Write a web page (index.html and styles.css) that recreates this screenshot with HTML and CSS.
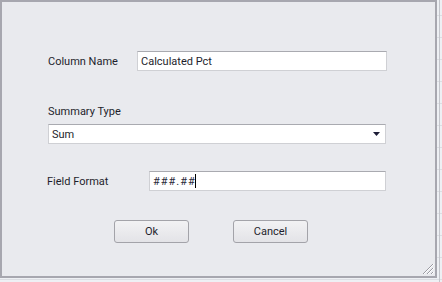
FILE: index.html
```html
<!DOCTYPE html>
<html>
<head>
<meta charset="utf-8">
<link rel="stylesheet" href="styles.css">
</head>
<body>
<div class="dialog">
  <div class="row row-name">
    <span class="label label-name">Column Name</span>
    <div class="field field-name">Calculated Pct</div>
  </div>
  <div class="label label-summary">Summary Type</div>
  <div class="field combo">
    <span>Sum</span>
    <svg class="arrow" width="7" height="4" viewBox="0 0 7 4"><path d="M0 0H7L3.5 4Z" fill="#1c1c36"/></svg>
  </div>
  <div class="row row-format">
    <span class="label label-format">Field Format</span>
    <div class="field field-format"><span class="mask">###.##</span><span class="caret"></span></div>
  </div>
  <div class="buttons">
    <button class="btn">Ok</button>
    <button class="btn">Cancel</button>
  </div>
  <svg class="grip" width="12" height="12" viewBox="0 0 12 12">
    <g fill="#9a9aa2">
      <rect x="10" y="1" width="1" height="1"/><rect x="9" y="2" width="1" height="1"/><rect x="8" y="3" width="1" height="1"/><rect x="7" y="4" width="1" height="1"/><rect x="6" y="5" width="1" height="1"/><rect x="5" y="6" width="1" height="1"/><rect x="4" y="7" width="1" height="1"/><rect x="3" y="8" width="1" height="1"/><rect x="2" y="9" width="1" height="1"/><rect x="1" y="10" width="1" height="1"/>
      <rect x="10" y="5" width="1" height="1"/><rect x="9" y="6" width="1" height="1"/><rect x="8" y="7" width="1" height="1"/><rect x="7" y="8" width="1" height="1"/><rect x="6" y="9" width="1" height="1"/><rect x="5" y="10" width="1" height="1"/>
      <rect x="10" y="9" width="1" height="1"/><rect x="9" y="10" width="1" height="1"/>
    </g>
    <g fill="#ffffff">
      <rect x="11" y="1" width="1" height="1"/><rect x="10" y="2" width="1" height="1"/><rect x="9" y="3" width="1" height="1"/><rect x="8" y="4" width="1" height="1"/><rect x="7" y="5" width="1" height="1"/><rect x="6" y="6" width="1" height="1"/><rect x="5" y="7" width="1" height="1"/><rect x="4" y="8" width="1" height="1"/><rect x="3" y="9" width="1" height="1"/><rect x="2" y="10" width="1" height="1"/>
      <rect x="11" y="5" width="1" height="1"/><rect x="10" y="6" width="1" height="1"/><rect x="9" y="7" width="1" height="1"/><rect x="8" y="8" width="1" height="1"/><rect x="7" y="9" width="1" height="1"/><rect x="6" y="10" width="1" height="1"/>
      <rect x="11" y="9" width="1" height="1"/><rect x="10" y="10" width="1" height="1"/>
    </g>
  </svg>
</div>
</body>
</html>
```

FILE: styles.css
```css
html, body {
  margin: 0;
  padding: 0;
}
body {
  width: 442px;
  height: 282px;
  overflow: hidden;
  background-color: #eef0f4;
  background-image:
    linear-gradient(to right, transparent 439px, #c4c6cc 439px, #c4c6cc 440px, transparent 440px),
    repeating-linear-gradient(to bottom, transparent 0, transparent 15px, #dcdee3 15px, #dcdee3 16px, transparent 16px, transparent 22px);
  font-family: Roboto, "Noto Sans", sans-serif;
  font-size: 11px;
  color: #1e1e2c;
}
.dialog {
  position: relative;
  box-sizing: border-box;
  width: 437px;
  height: 278px;
  border: 2px solid #a7a7af;
  background: #e9eaee;
  padding-left: 46px;
}
.row {
  display: flex;
  align-items: center;
}
.row-name {
  margin-top: 49px;
}
.label {
  line-height: 13px;
  white-space: nowrap;
}
.label-name {
  width: 89px;
}
.field {
  box-sizing: border-box;
  height: 20px;
  background: #ffffff;
  border: 1px solid #cfd0d4;
  border-top-color: #a9aab0;
  padding-left: 3px;
  display: flex;
  align-items: center;
  line-height: 13px;
}
.field-name {
  width: 250px;
}
.label-summary {
  margin-top: 34px;
  margin-bottom: 6px;
}
.combo {
  width: 338px;
  justify-content: space-between;
  padding-right: 5px;
}
.arrow {
  display: block;
}
.row-format {
  margin-top: 27px;
  margin-left: -1px;
}
.label-format {
  width: 102px;
}
.field-format {
  width: 237px;
}
.mask {
  letter-spacing: 1px;
  color: #2a2a3a;
}
.caret {
  display: inline-block;
  width: 1px;
  height: 14px;
  background: #000000;
  margin-left: -1px;
}
.buttons {
  display: flex;
  gap: 44px;
  margin-top: 29px;
  margin-left: 66px;
}
.btn {
  box-sizing: border-box;
  width: 75px;
  height: 23px;
  border: 1px solid #a3a3a9;
  border-radius: 3px;
  background: linear-gradient(to bottom, #f2f2f4, #e3e3e7);
  font-family: Roboto, "Noto Sans", sans-serif;
  font-size: 11px;
  color: #1e1e2c;
  padding: 0;
  line-height: 13px;
}
.grip {
  position: absolute;
  right: 1px;
  bottom: 1px;
}
```
